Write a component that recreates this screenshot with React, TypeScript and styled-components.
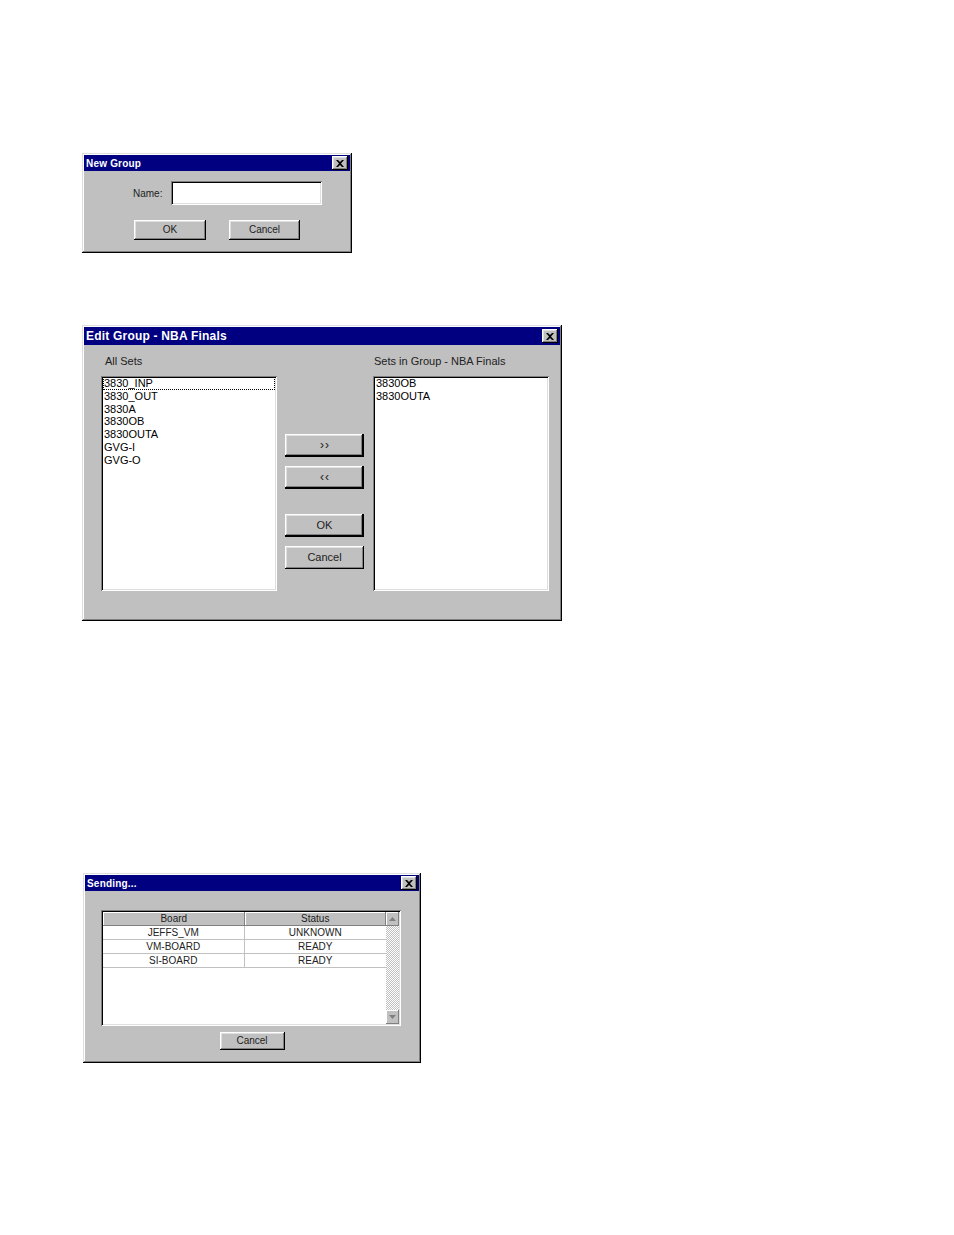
import React from "react";
import styled, { createGlobalStyle } from "styled-components";

const GlobalStyle = createGlobalStyle`
  body {
    margin: 0;
    background: #fff;
    font-family: "Liberation Sans", Arial, sans-serif;
  }
`;

const raised = `
  box-shadow: inset -1px -1px #000, inset 1px 1px #fff, inset -2px -2px #808080, inset 2px 2px #dfdfdf;
`;

const sunken = `
  box-shadow: inset 1px 1px #808080, inset -1px -1px #fff, inset 2px 2px #000, inset -2px -2px #dfdfdf;
`;

const Page = styled.div`
  display: flex;
  flex-direction: column;
  align-items: flex-start;
  padding-top: 153px;
  min-height: 1235px;
  box-sizing: border-box;
`;

const Frame = styled.div<{ $w: number; $h: number; $top: number; $left: number; $fs: number }>`
  width: ${(p) => p.$w}px;
  height: ${(p) => p.$h}px;
  margin-top: ${(p) => p.$top}px;
  margin-left: ${(p) => p.$left}px;
  box-sizing: border-box;
  padding: 2px;
  background: #c0c0c0;
  font-size: ${(p) => p.$fs}px;
  color: #000;
  display: flex;
  flex-direction: column;
  box-shadow: inset -1px -1px #000, inset 1px 1px #dfdfdf, inset -2px -2px #808080, inset 2px 2px #fff;
`;

const TitleBar = styled.div<{ $h: number; $fs: number }>`
  height: ${(p) => p.$h}px;
  flex: none;
  background: #000080;
  color: #fff;
  font-weight: bold;
  font-size: ${(p) => p.$fs}px;
  display: flex;
  align-items: center;
  justify-content: space-between;
  padding: 0 2px 0 2px;
  letter-spacing: 0.2px;
`;

const CloseButton = styled.div`
  width: 16px;
  height: 14px;
  background: #c0c0c0;
  display: flex;
  align-items: center;
  justify-content: center;
  ${raised}
`;

const Button = styled.div<{ $w: number; $h: number; $strong?: boolean }>`
  width: ${(p) => p.$w}px;
  height: ${(p) => p.$h}px;
  box-sizing: border-box;
  background: #c0c0c0;
  display: flex;
  align-items: center;
  justify-content: center;
  padding-bottom: 1px;
  color: #222;
  ${(p) =>
    p.$strong
      ? `box-shadow: inset -2px -2px #000, inset 1px 1px #fff, inset -3px -3px #808080, inset 2px 2px #dfdfdf;`
      : raised}
`;

const Chevrons = styled.span`
  font-size: 12px;
  line-height: 1;
  letter-spacing: 1px;
  padding-left: 1px;
`;

/* New Group */

const NameRow = styled.div`
  display: flex;
  align-items: center;
  margin-top: 10px;
  padding-left: 49px;
`;

const FieldLabel = styled.span`
  width: 29px;
  text-align: right;
  margin-right: 9px;
  color: #222;
`;

const TextField = styled.div`
  width: 151px;
  height: 24px;
  background: #fff;
  ${sunken}
`;

const ButtonRow = styled.div`
  display: flex;
  gap: 23px;
  margin-top: 15px;
  padding-left: 50px;
`;

/* Edit Group */

const Columns = styled.div`
  display: flex;
  align-items: flex-start;
  padding: 10px 0 0 17px;
`;

const ListColumn = styled.div`
  display: flex;
  flex-direction: column;
`;

const ListLabel = styled.div<{ $indent: number }>`
  height: 13px;
  line-height: 13px;
  margin: 0 0 8px ${(p) => p.$indent}px;
  color: #222;
`;

const ListBox = styled.div`
  width: 176px;
  height: 215px;
  box-sizing: border-box;
  background: #fff;
  padding: 1px 2px;
  ${sunken}
`;

const ListItem = styled.div<{ $focus?: boolean }>`
  height: 12.8px;
  line-height: 12.8px;
  padding-left: 1px;
  white-space: nowrap;
  outline: ${(p) => (p.$focus ? "1px dotted #000" : "none")};
  outline-offset: -1px;
`;

const MoveColumn = styled.div`
  display: flex;
  flex-direction: column;
  gap: 9px;
  padding-top: 79px;
  margin: 0 9px 0 8px;
`;

const MoveGap = styled.div`
  height: 7px;
`;

/* Sending */

const SendingBody = styled.div`
  display: flex;
  flex-direction: column;
  align-items: center;
  padding-top: 19px;
`;

const TableFrame = styled.div`
  width: 300px;
  height: 116px;
  margin-right: 2px;
  box-sizing: border-box;
  padding: 2px;
  background: #fff;
  display: flex;
  ${sunken}
`;

const Grid = styled.div`
  flex: 1;
  display: grid;
  grid-template-columns: 1fr 1fr;
  grid-auto-rows: 14px;
  align-content: start;
`;

const HeaderCell = styled.div`
  background: #c0c0c0;
  text-align: center;
  line-height: 14px;
  color: #222;
  box-shadow: inset -1px -1px #808080, inset 1px 1px #fff;
`;

const Cell = styled.div<{ $first?: boolean }>`
  text-align: center;
  line-height: 13px;
  border-bottom: 1px solid #c0c0c0;
  border-right: ${(p) => (p.$first ? "1px solid #c0c0c0" : "none")};
  color: #222;
`;

const ScrollBar = styled.div`
  width: 13px;
  display: flex;
  flex-direction: column;
`;

const ScrollArrow = styled.div`
  height: 14px;
  flex: none;
  background: #c0c0c0;
  display: flex;
  align-items: center;
  justify-content: center;
  box-shadow: inset -1px -1px #808080, inset 1px 1px #fff;
`;

const ScrollTrack = styled.div`
  flex: 1;
  background-color: #fff;
  background-image: conic-gradient(#c0c0c0 25%, #fff 0 50%, #c0c0c0 0 75%, #fff 0);
  background-size: 2px 2px;
`;

const CancelWrap = styled.div`
  margin-top: 6px;
`;

function CloseX() {
  return (
    <svg width="8" height="7" viewBox="0 0 8 7">
      <path d="M0 0h2l2 2 2-2h2L5 3.5 8 7H6L4 5 2 7H0l3-3.5z" fill="#000" />
    </svg>
  );
}

function Arrow({ down }: { down?: boolean }) {
  return (
    <svg width="7" height="4" viewBox="0 0 7 4">
      <path d={down ? "M0 0h7L3.5 4z" : "M3.5 0L7 4H0z"} fill="#808080" />
    </svg>
  );
}

type WindowProps = {
  title: string;
  w: number;
  h: number;
  top: number;
  left: number;
  fs: number;
  titleH: number;
  titleFs: number;
  children: React.ReactNode;
};

function Window({ title, w, h, top, left, fs, titleH, titleFs, children }: WindowProps) {
  return (
    <Frame $w={w} $h={h} $top={top} $left={left} $fs={fs}>
      <TitleBar $h={titleH} $fs={titleFs}>
        <span>{title}</span>
        <CloseButton>
          <CloseX />
        </CloseButton>
      </TitleBar>
      {children}
    </Frame>
  );
}

const allSets = ["3830_INP", "3830_OUT", "3830A", "3830OB", "3830OUTA", "GVG-I", "GVG-O"];
const groupSets = ["3830OB", "3830OUTA"];
const boards = [
  { board: "JEFFS_VM", status: "UNKNOWN" },
  { board: "VM-BOARD", status: "READY" },
  { board: "SI-BOARD", status: "READY" },
];

export default function App() {
  return (
    <>
      <GlobalStyle />
      <Page>
        <Window title="New Group" w={270} h={100} top={0} left={82} fs={10} titleH={16} titleFs={10}>
          <NameRow>
            <FieldLabel>Name:</FieldLabel>
            <TextField />
          </NameRow>
          <ButtonRow>
            <Button $w={72} $h={20}>OK</Button>
            <Button $w={71} $h={20}>Cancel</Button>
          </ButtonRow>
        </Window>

        <Window title="Edit Group - NBA Finals" w={480} h={296} top={72} left={82} fs={11} titleH={18} titleFs={12}>
          <Columns>
            <ListColumn>
              <ListLabel $indent={4}>All Sets</ListLabel>
              <ListBox>
                {allSets.map((s, i) => (
                  <ListItem key={s} $focus={i === 0}>{s}</ListItem>
                ))}
              </ListBox>
            </ListColumn>
            <MoveColumn>
              <Button $w={79} $h={23} $strong>
                <Chevrons>&rsaquo;&rsaquo;</Chevrons>
              </Button>
              <Button $w={79} $h={23} $strong>
                <Chevrons>&lsaquo;&lsaquo;</Chevrons>
              </Button>
              <MoveGap />
              <Button $w={79} $h={23} $strong>OK</Button>
              <Button $w={79} $h={23}>Cancel</Button>
            </MoveColumn>
            <ListColumn>
              <ListLabel $indent={1}>Sets in Group - NBA Finals</ListLabel>
              <ListBox>
                {groupSets.map((s) => (
                  <ListItem key={s}>{s}</ListItem>
                ))}
              </ListBox>
            </ListColumn>
          </Columns>
        </Window>

        <Window title="Sending..." w={338} h={190} top={252} left={83} fs={10} titleH={16} titleFs={10}>
          <SendingBody>
            <TableFrame>
              <Grid>
                <HeaderCell>Board</HeaderCell>
                <HeaderCell>Status</HeaderCell>
                {boards.map((b) => (
                  <React.Fragment key={b.board}>
                    <Cell $first>{b.board}</Cell>
                    <Cell>{b.status}</Cell>
                  </React.Fragment>
                ))}
              </Grid>
              <ScrollBar>
                <ScrollArrow>
                  <Arrow />
                </ScrollArrow>
                <ScrollTrack />
                <ScrollArrow>
                  <Arrow down />
                </ScrollArrow>
              </ScrollBar>
            </TableFrame>
            <CancelWrap>
              <Button $w={65} $h={18}>Cancel</Button>
            </CancelWrap>
          </SendingBody>
        </Window>
      </Page>
    </>
  );
}
